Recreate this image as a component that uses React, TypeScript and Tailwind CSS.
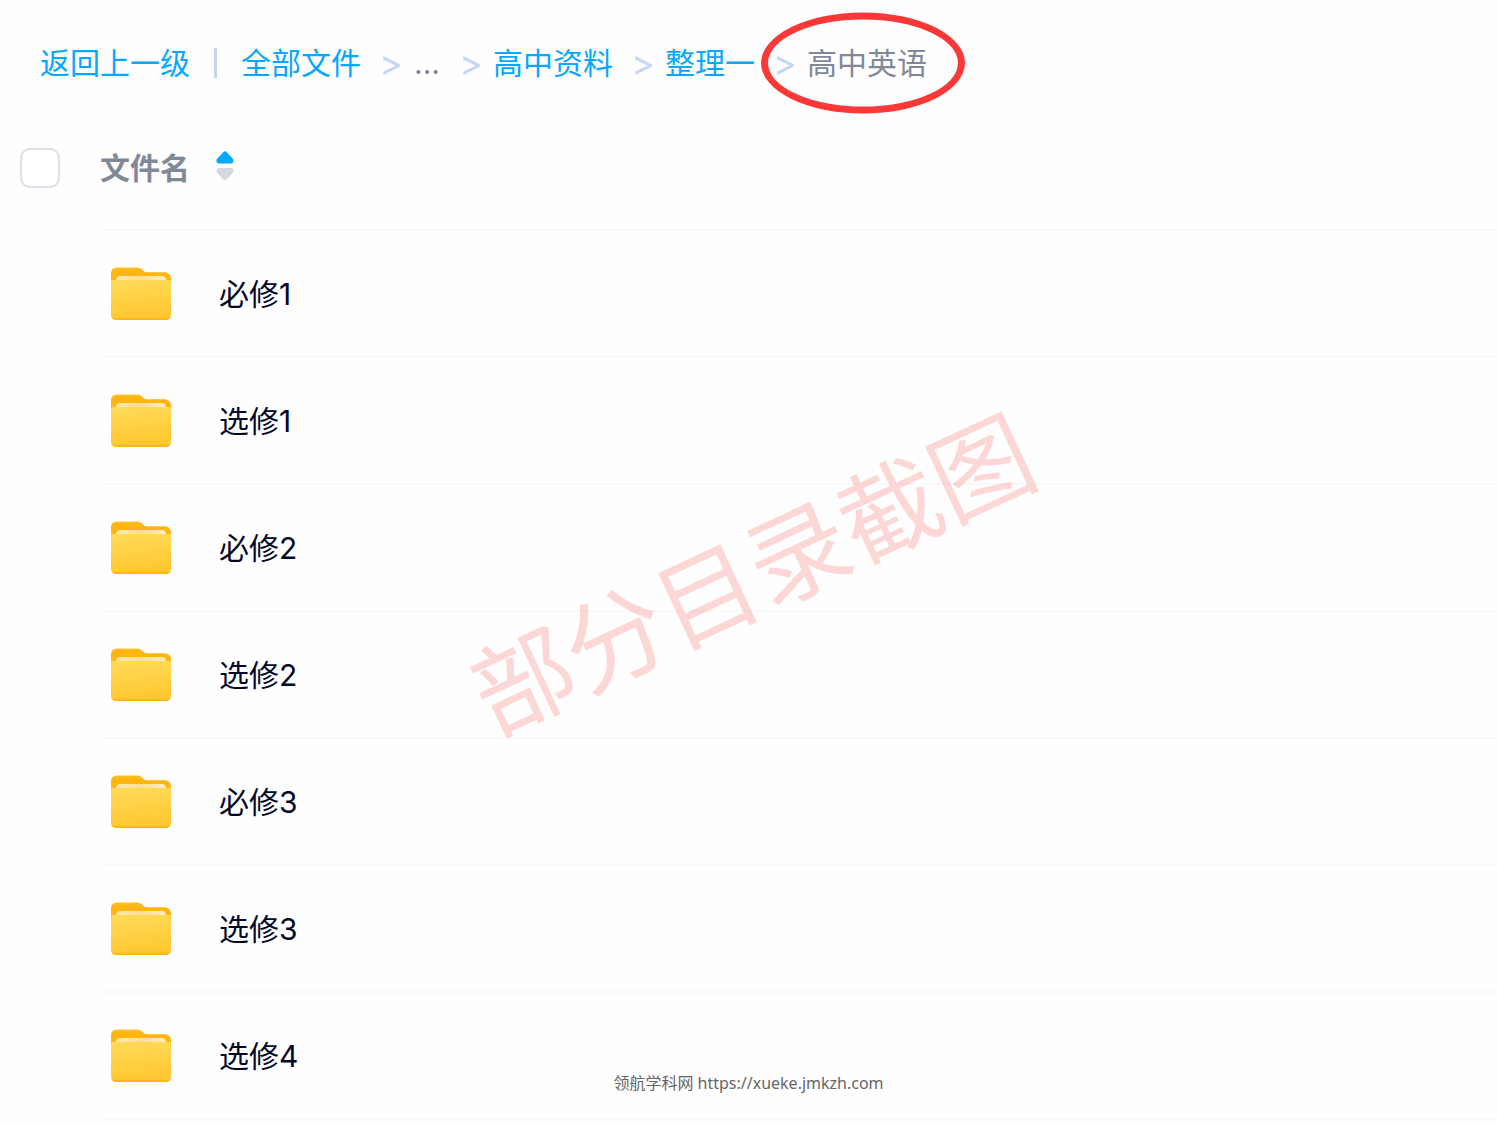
import { useState } from "react";
import clsx from "clsx";

const FOLDERS = ["必修1", "选修1", "必修2", "选修2", "必修3", "选修3", "选修4"];

const CRUMBS = ["全部文件", "...", "高中资料", "整理一", "高中英语"];

function FolderIcon() {
  return (
    <svg className="h-[55px] w-[60px] shrink-0" viewBox="0 0 60 55" fill="none" aria-hidden="true">
      <defs>
        <linearGradient id="folder-back" x1="0" y1="1" x2="0" y2="14" gradientUnits="userSpaceOnUse">
          <stop stopColor="#ffc530" />
          <stop offset="0.3" stopColor="#ffb50f" />
          <stop offset="1" stopColor="#ffb614" />
        </linearGradient>
        <linearGradient id="folder-paper" x1="0" y1="0" x2="60" y2="0" gradientUnits="userSpaceOnUse">
          <stop stopColor="#ffeeb0" />
          <stop offset="0.5" stopColor="#ffdc95" />
          <stop offset="1" stopColor="#fff3cc" />
        </linearGradient>
        <linearGradient id="folder-front" x1="28" y1="13" x2="32" y2="54" gradientUnits="userSpaceOnUse">
          <stop stopColor="#ffda58" />
          <stop offset="1" stopColor="#ffc62e" />
        </linearGradient>
      </defs>
      <path d="M0 7a5.500 5.500 0 0 1 5.500-5.500H26c2 0 3.500.6 4.800 1.700l2.200 2.100c.7.600 1.500.9 2.600.9H54a6 6 0 0 1 6 6V25H0Z" fill="url(#folder-back)" />
      <path d="M5 15c0-3.500 1.500-5 4-5h42c2.500 0 4 1.500 4 5Z" fill="url(#folder-paper)" />
      <path d="M0 15C0 14.200.6 14 1.500 14h57c.9 0 1.500.2 1.500 1V49a5 5 0 0 1-5 5H5a5 5 0 0 1-5-5Z" fill="url(#folder-front)" />
      <path d="M.5 51c1 2 2.700 3 4.500 3h50c1.800 0 3.500-1 4.500-3-1 .8-2.700 1.300-4.500 1.300H5c-1.800 0-3.500-.5-4.500-1.300Z" fill="#ffb414" />
    </svg>
  );
}

function SortIcon({ ascending }: { ascending: boolean }) {
  return (
    <svg className="h-[34px] w-[18px]" viewBox="0 0 18 34" aria-hidden="true">
      <path
        d="M7.200 1.200a2.600 2.600 0 0 1 3.600 0l5.900 6.200c1.600 1.900.9 5.100-1.700 5.100H3C.4 12.500-.3 9.300 1.300 7.400Z"
        className={ascending ? "fill-[#06a7ff]" : "fill-[#d4d7de]"}
      />
      <path
        d="M7.200 28.300a2.600 2.600 0 0 0 3.600 0l5.900-6.200c1.600-1.900.9-5.100-1.700-5.100H3C.4 17-.3 20.200 1.300 22.100Z"
        className={ascending ? "fill-[#d4d7de]" : "fill-[#06a7ff]"}
      />
    </svg>
  );
}

function Breadcrumb() {
  return (
    <nav aria-label="目录" className="flex h-[107px] items-center pt-[18px] pl-10 text-[30px] leading-10 text-[#06a7ff]">
      <a href="#back">返回上一级</a>
      <span className="mx-6 h-[30px] w-[3px] bg-[#c4d8f6]" />
      <ol className="flex items-center">
        {CRUMBS.map((name, i) => {
          const isCurrent = i === CRUMBS.length - 1;
          return (
            <li key={name} className="relative flex items-center">
              {i > 0 && <span className="mr-3 ml-5 flex w-5 justify-center text-[36px] text-[#c4d8f6]">&gt;</span>}
              {isCurrent || name === "..." ? (
                <span className={clsx("text-[#818999]", name === "..." && "w-7 text-center")}>{name}</span>
              ) : (
                <a href={`#${name}`}>{name}</a>
              )}
              {/* Red ring round the current folder */}
              {isCurrent && (
                <span className="pointer-events-none absolute top-1/2 -right-[38px] h-[101px] w-[204px] -translate-y-1/2 rounded-[50%] border-[7px] border-[#fb3838]" />
              )}
            </li>
          );
        })}
      </ol>
    </nav>
  );
}

export default function App() {
  const [ascending, setAscending] = useState(true);
  const rows = ascending ? FOLDERS : [...FOLDERS].reverse();

  return (
    <div className="relative min-h-screen w-full overflow-hidden bg-[#fefefe] font-[Inter,'Noto_Sans_CJK_SC',sans-serif] text-[#030826]">
      <Breadcrumb />

      <table className="w-full table-fixed border-separate border-spacing-0 text-left text-[30px] leading-10">
        <thead>
          <tr className="h-[124px]">
            <th className="w-[100px] border-b-2 border-transparent pl-5">
              <input
                type="checkbox"
                aria-label="全选"
                className="block size-10 appearance-none rounded-[10px] border-2 border-[#dcdfe8] bg-white checked:bg-[#06a7ff]"
              />
            </th>
            <th className="border-b-2 border-[#f9f9fa] font-bold text-[#818999]">
              <button type="button" onClick={() => setAscending(!ascending)} className="flex items-center gap-[26px]">
                文件名
                <SortIcon ascending={ascending} />
              </button>
            </th>
          </tr>
        </thead>
        <tbody>
          {rows.map((name) => (
            <tr key={name} className="h-[127px]">
              <td />
              <td className="border-b-2 border-[#f9f9fa] pl-[11px]">
                <div className="flex items-center gap-12">
                  <FolderIcon />
                  <span>{name}</span>
                </div>
              </td>
            </tr>
          ))}
        </tbody>
      </table>

      {/* Watermark */}
      <div className="pointer-events-none absolute inset-0 flex items-center justify-center pt-[26px] pl-[10px]">
        <span className="-rotate-25 text-[101px] leading-none whitespace-nowrap text-[#fb3838]/20">部分目录截图</span>
      </div>

      <p className="absolute inset-x-0 bottom-[30px] text-center font-['Noto_Sans','Noto_Sans_CJK_SC',sans-serif] text-base text-[#666666]">
        领航学科网 https://xueke.jmkzh.com
      </p>
    </div>
  );
}
